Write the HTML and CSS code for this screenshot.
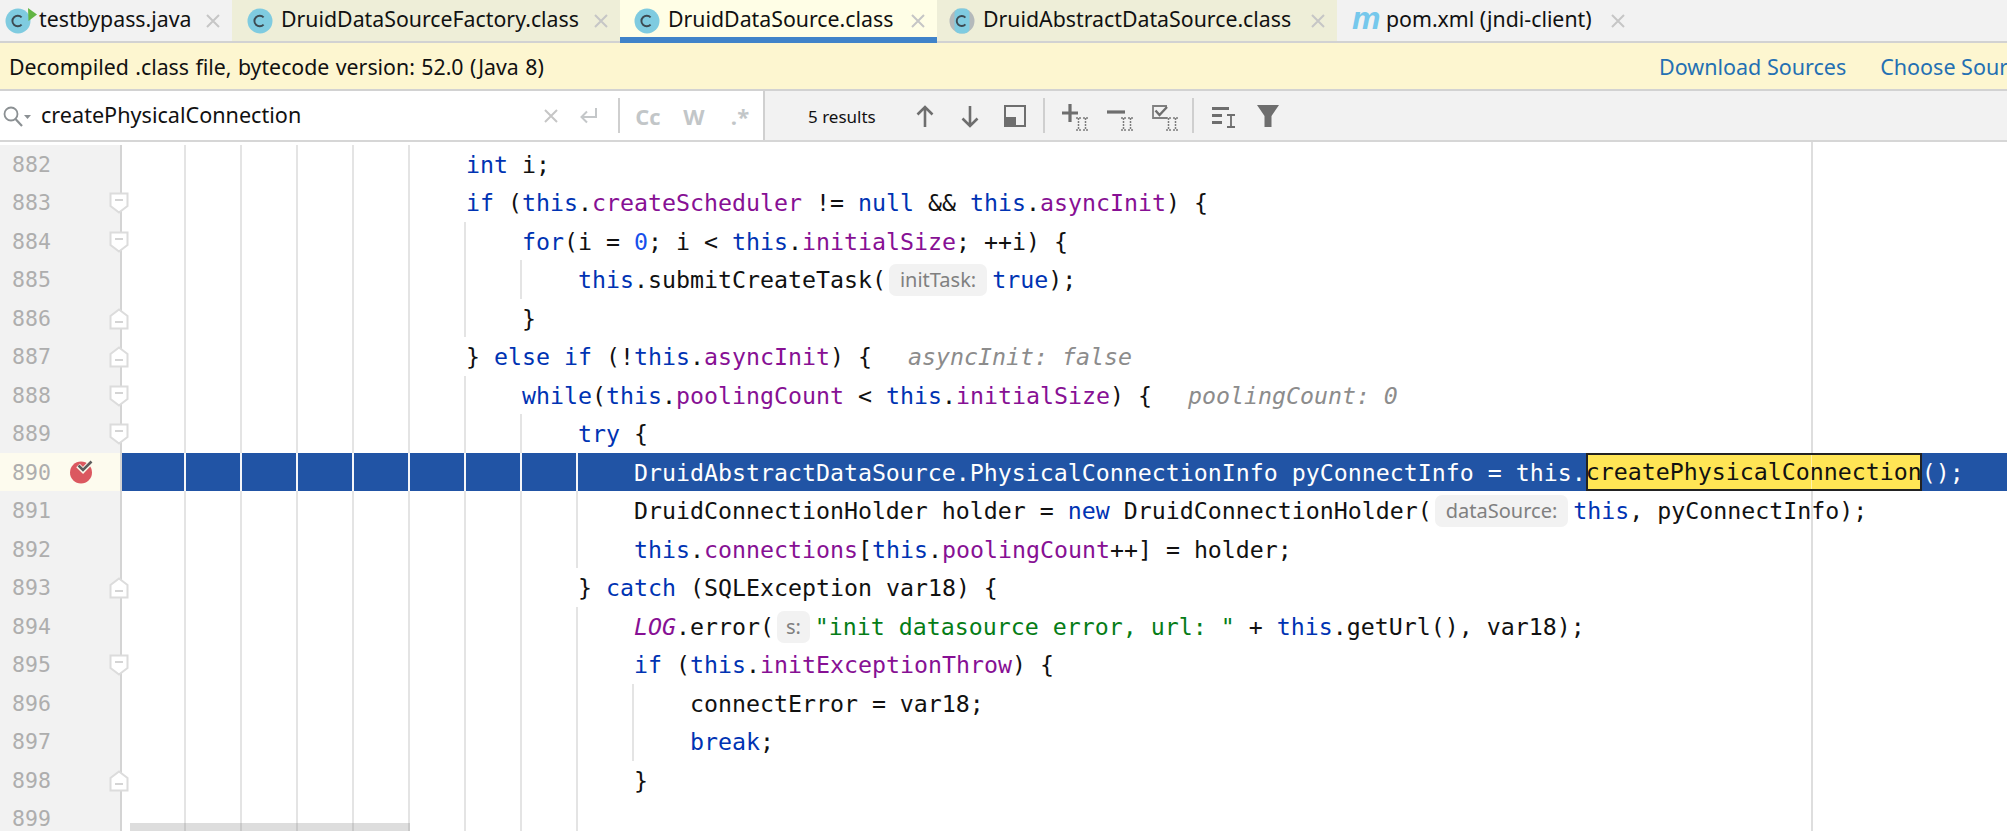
FILE: index.html
```html
<!DOCTYPE html>
<html lang="en">
<head>
<meta charset="utf-8">
<title>DruidDataSource.class</title>
<link rel="stylesheet" href="styles.css">
</head>
<body>
<svg class="defs" width="0" height="0" aria-hidden="true">
  <symbol id="fd" viewBox="0 0 20 22"><path d="M1.500 1.500H18.500V14L10 20.500L1.500 14Z" fill="#fff" stroke="#dcdcdc" stroke-width="2"/><path d="M6 8H14" stroke="#d4d4d4" stroke-width="2"/></symbol>
  <symbol id="fu" viewBox="0 0 20 22"><path d="M1.500 20.500H18.500V8L10 1.500L1.500 8Z" fill="#fff" stroke="#dcdcdc" stroke-width="2"/><path d="M6 14H14" stroke="#d4d4d4" stroke-width="2"/></symbol>
  <symbol id="x" viewBox="0 0 14 14"><path d="M1 1L13 13M13 1L1 13" stroke="#c6c6c6" stroke-width="2" fill="none"/></symbol>
  <symbol id="cls" viewBox="0 0 26 26"><circle cx="13" cy="13" r="12.5" fill="#7fcbe0"/><path d="M16.6 9.4A5.3 5.3 0 1 0 16.6 16.6" fill="none" stroke="#3d4a52" stroke-width="1.9"/></symbol>
  <symbol id="ii" viewBox="0 0 14 14"><path d="M1 1H6M8 1H13M1 13H6M8 13H13M3.5 1V13M10.5 1V13" stroke="#7c7c7c" stroke-width="1.5" stroke-dasharray="2 1" fill="none"/></symbol>
</svg>

<nav class="tabs">
  <div class="tab t1">
    <svg class="ticon" viewBox="0 0 34 26" width="34" height="26"><use href="#cls" width="26" height="26"/><path d="M23 0L32 6.5L23.5 13Z" fill="#62b543"/></svg>
    <span class="tname">testbypass.java</span>
    <svg class="tclose" width="14" height="14"><use href="#x"/></svg>
  </div>
  <div class="tab t2 olive">
    <svg class="ticon" width="26" height="26"><use href="#cls"/></svg>
    <span class="tname">DruidDataSourceFactory.class</span>
    <svg class="tclose" width="14" height="14"><use href="#x"/></svg>
  </div>
  <div class="tab t3 active">
    <svg class="ticon" width="26" height="26"><use href="#cls"/></svg>
    <span class="tname">DruidDataSource.class</span>
    <svg class="tclose" width="14" height="14"><use href="#x"/></svg>
  </div>
  <div class="tab t4 olive">
    <svg class="ticon" viewBox="0 0 26 26" width="26" height="26"><circle cx="13" cy="13" r="12.5" fill="#b4b9bb"/><rect x="5.5" y="0.5" width="15" height="25" rx="5" fill="#7fcbe0"/><path d="M16.4 9.6A5 5 0 1 0 16.4 16.4" fill="none" stroke="#3d4a52" stroke-width="1.9"/></svg>
    <span class="tname">DruidAbstractDataSource.class</span>
    <svg class="tclose" width="14" height="14"><use href="#x"/></svg>
  </div>
  <div class="tab t5">
    <span class="micon">m</span>
    <span class="tname">pom.xml (jndi-client)</span>
    <svg class="tclose" width="14" height="14"><use href="#x"/></svg>
  </div>
</nav>

<div class="info">
  <span class="info-msg">Decompiled .class file, bytecode version: 52.0 (Java 8)</span>
  <a class="link">Download Sources</a>
  <a class="link">Choose Sources...</a>
</div>

<div class="search">
  <div class="field">
    <svg class="mag" viewBox="0 0 34 24" width="34" height="24"><circle cx="9" cy="9" r="6.5" fill="none" stroke="#8b9093" stroke-width="1.8"/><path d="M13.5 14L20 21" stroke="#8b9093" stroke-width="2.2"/><path d="M22 10H29L25.500 14Z" fill="#8b9093"/></svg>
    <span class="query">createPhysicalConnection</span>
    <svg class="fclear" width="14" height="14"><use href="#x"/></svg>
    <svg class="fenter" viewBox="0 0 24 24" width="24" height="24"><path d="M20 4V13H6M11 7.500L5.500 13L11 18.500" fill="none" stroke="#c4c7c9" stroke-width="2"/></svg>
    <span class="sep fsep"></span>
    <span class="opt">Cc</span>
    <span class="opt">W</span>
    <span class="opt">.*</span>
  </div>
  <div class="tools">
    <span class="results">5 results</span>
    <svg class="ic up" viewBox="0 0 22 30" width="22" height="30"><path d="M11 26V7M3.500 13.500L11 6L18.500 13.500" fill="none" stroke="#6e6e6e" stroke-width="2.600"/></svg>
    <svg class="ic dn" viewBox="0 0 22 30" width="22" height="30"><path d="M11 5V24M3.500 17.500L11 25L18.500 17.500" fill="none" stroke="#6e6e6e" stroke-width="2.600"/></svg>
    <svg class="ic pane" viewBox="0 0 22 30" width="22" height="30"><rect x="1" y="5" width="20" height="20" fill="none" stroke="#6e6e6e" stroke-width="2"/><rect x="1" y="16" width="11" height="9" fill="#6e6e6e"/></svg>
    <span class="sep tsep1"></span>
    <svg class="ic plus" viewBox="0 0 30 30" width="30" height="30"><path d="M10 3V21M2 12H18" stroke="#6e6e6e" stroke-width="3.200"/><use href="#ii" x="15" y="16" width="14" height="14"/></svg>
    <svg class="ic minus" viewBox="0 0 30 30" width="30" height="30"><path d="M2 11H20" stroke="#6e6e6e" stroke-width="3.200"/><use href="#ii" x="15" y="16" width="14" height="14"/></svg>
    <svg class="ic check" viewBox="0 0 30 30" width="30" height="30"><path d="M17 5H3V17H17" fill="none" stroke="#808080" stroke-width="1.800"/><path d="M5.500 9.500L9.500 14L17 6" fill="none" stroke="#6e6e6e" stroke-width="2.400"/><use href="#ii" x="15" y="16" width="14" height="14"/></svg>
    <span class="sep tsep2"></span>
    <svg class="ic align" viewBox="0 0 26 30" width="26" height="30"><path d="M2 7.500H19M2 14.500H12M2 21.500H12" stroke="#6e6e6e" stroke-width="3"/><path d="M17 14H25M17 26H25M21 14V26" stroke="#6e6e6e" stroke-width="1.800" fill="none"/></svg>
    <svg class="ic funnel" viewBox="0 0 24 30" width="24" height="30"><path d="M1 4H23L15.500 15V26H8.500V15Z" fill="#6e6e6e"/></svg>
  </div>
</div>

<main class="editor">
  <div class="row"><div class="gut">882</div><pre class="code d5">                        <b>int</b> i;</pre></div>
  <div class="row"><div class="gut">883<svg class="fold"><use href="#fd"/></svg></div><pre class="code d5">                        <b>if</b> (<b>this</b>.<i>createScheduler</i> != <b>null</b> &amp;&amp; <b>this</b>.<i>asyncInit</i>) {</pre></div>
  <div class="row"><div class="gut">884<svg class="fold"><use href="#fd"/></svg></div><pre class="code d6">                            <b>for</b>(i = <u>0</u>; i &lt; <b>this</b>.<i>initialSize</i>; ++i) {</pre></div>
  <div class="row"><div class="gut">885</div><pre class="code d7">                                <b>this</b>.submitCreateTask(<span class="hint">initTask:</span><b>true</b>);</pre></div>
  <div class="row"><div class="gut">886<svg class="fold"><use href="#fu"/></svg></div><pre class="code d6">                            }</pre></div>
  <div class="row"><div class="gut">887<svg class="fold"><use href="#fu"/></svg></div><pre class="code d5">                        } <b>else if</b> (!<b>this</b>.<i>asyncInit</i>) {<em class="dbg">asyncInit: false</em></pre></div>
  <div class="row"><div class="gut">888<svg class="fold"><use href="#fd"/></svg></div><pre class="code d6">                            <b>while</b>(<b>this</b>.<i>poolingCount</i> &lt; <b>this</b>.<i>initialSize</i>) {<em class="dbg">poolingCount: 0</em></pre></div>
  <div class="row"><div class="gut">889<svg class="fold"><use href="#fd"/></svg></div><pre class="code d7">                                <b>try</b> {</pre></div>
  <div class="row exec"><div class="gut">890<svg class="bp" viewBox="0 0 26 26" width="26" height="26"><circle cx="12" cy="14.500" r="11" fill="#db5860"/><path d="M9 7.500L14 12.500L23 3" fill="none" stroke="#fdfbee" stroke-width="5"/><path d="M9.500 7.500L14 12L22.500 3.500" fill="none" stroke="#5c5c5c" stroke-width="2.600"/></svg></div><pre class="code d8">                                    DruidAbstractDataSource.PhysicalConnectionInfo pyConnectInfo = this.<span class="match">createPhysicalConnection</span>();</pre></div>
  <div class="row"><div class="gut">891</div><pre class="code d8">                                    DruidConnectionHolder holder = <b>new</b> DruidConnectionHolder(<span class="hint">dataSource:</span><b>this</b>, pyConnectInfo);</pre></div>
  <div class="row"><div class="gut">892</div><pre class="code d8">                                    <b>this</b>.<i>connections</i>[<b>this</b>.<i>poolingCount</i>++] = holder;</pre></div>
  <div class="row"><div class="gut">893<svg class="fold"><use href="#fu"/></svg></div><pre class="code d7">                                } <b>catch</b> (SQLException var18) {</pre></div>
  <div class="row"><div class="gut">894</div><pre class="code d8">                                    <i class="static">LOG</i>.error(<span class="hint hint-s">s:</span><s>"init datasource error, url: "</s> + <b>this</b>.getUrl(), var18);</pre></div>
  <div class="row"><div class="gut">895<svg class="fold"><use href="#fd"/></svg></div><pre class="code d8">                                    <b>if</b> (<b>this</b>.<i>initExceptionThrow</i>) {</pre></div>
  <div class="row"><div class="gut">896</div><pre class="code d9">                                        connectError = var18;</pre></div>
  <div class="row"><div class="gut">897</div><pre class="code d9">                                        <b>break</b>;</pre></div>
  <div class="row"><div class="gut">898<svg class="fold"><use href="#fu"/></svg></div><pre class="code d8">                                    }</pre></div>
  <div class="row"><div class="gut">899</div><pre class="code d8"> </pre></div>
  <div class="hscroll"></div>
</main>
</body>
</html>
```
FILE: styles.css
```css
* { box-sizing: border-box; }
html, body { margin: 0; height: 100%; overflow: hidden; background: #fff; }
body { width: 2007px; height: 831px; font-family: "Noto Sans", "Open Sans", sans-serif; color: #111; }
.defs { position: absolute; }

/* tabs */
.tabs { display: flex; height: 43px; background: #f2f2f2; border-bottom: 2px solid #d2d2d2; }
.tab { display: flex; align-items: center; height: 41px; font-size: 21.3px; white-space: nowrap; padding-left: 5px; position: relative; }
.tab .tname { flex: none; padding-bottom: 4px; }
.t1 { width: 232px; }
.t2 { width: 388px; padding-left: 15px; }
.t3 { width: 317px; padding-left: 14px; }
.t4 { width: 400px; padding-left: 12px; }
.t5 { width: 300px; padding-left: 15px; }
.olive { background: #eeeed8; }
.active { background: #fffee6; box-shadow: inset 0 -4px 0 #4083c9, 0 2px 0 #4083c9; }
.ticon { flex: none; margin-right: 8px; }
.t1 .ticon { margin-right: 0; }
.tclose { flex: none; margin-left: auto; margin-right: 12px; }
.micon { font-family: "Liberation Sans", sans-serif; font-weight: 700; font-style: italic; font-size: 32px; line-height: 36px; color: #76c8ec; width: 34px; margin-top: -6px; }

/* info bar */
.info { display: flex; align-items: center; height: 48px; background: #fdf6d0; border-bottom: 2px solid #d2d2d2; padding-left: 9px; font-size: 21.3px; white-space: nowrap; }
.info-msg { flex: none; width: 1650px; word-spacing: 0.9px; }
.link { flex: none; color: #2470b3; margin-right: 34px; font-size: 21.5px; }

/* search */
.search { display: flex; height: 51px; background: #f2f2f2; border-bottom: 2px solid #d6d6d6; }
.field { flex: none; display: flex; align-items: center; width: 765px; height: 49px; background: #fff; border-right: 2px solid #d0d0d0; padding-left: 2px; }
.mag { flex: none; margin-top: 3px; }
.query { flex: 1; padding-left: 5px; padding-bottom: 3px; font-size: 21.6px; }
.fclear { flex: none; margin-right: 18px; }
.fenter { flex: none; margin-right: 18px; }
.sep { flex: none; width: 2px; height: 35px; background: #cfcfcf; }
.fsep { margin-right: 5px; }
.opt { flex: none; width: 46px; text-align: center; font-family: "Open Sans", sans-serif; font-weight: 700; font-size: 22px; color: #c2c6c8; }
.tools { display: flex; align-items: center; height: 49px; flex: 1; }
.results { flex: none; width: 67px; margin-left: 43px; font-size: 17px; white-space: nowrap; padding-top: 1px; }
.ic { flex: none; }
.up { margin-left: 39px; }
.dn, .pane { margin-left: 23px; }
.tsep1 { margin-left: 17px; }
.plus { margin-left: 15px; }
.minus, .check { margin-left: 15px; }
.tsep2 { margin-left: 12px; }
.align { margin-left: 16px; }
.funnel { margin-left: 20px; }

/* editor */
.editor { position: relative; height: 689px; padding-top: 2.5px; overflow: hidden; background: linear-gradient(#dedede, #dedede) 1811px 0 / 2px 100% no-repeat; }
.row { display: flex; height: 38.5px; }
.gut { flex: none; position: relative; width: 122px; background-color: #f2f2f2; border-right: 2px solid #d4d4d4; padding: 1px 0 0 12px; font-family: "DejaVu Sans Mono", monospace; font-size: 21.500px; line-height: 38.5px; color: #aeaeae; }
.fold { position: absolute; z-index: 1; top: 9px; right: -9px; width: 20px; height: 22px; }
.bp { position: absolute; top: 5px; left: 69px; }
.code { flex: 1; min-width: 0; margin: 0; padding: 1px 0 0 8px; font-family: "DejaVu Sans Mono", monospace; font-size: 23.250px; line-height: 38.5px; color: #111; white-space: pre; background-image: repeating-linear-gradient(90deg, #e4e4e4 0 2px, transparent 2px 56px); background-repeat: no-repeat; background-position: 62px 0; }
.d5 { background-size: 280px 100%; }
.d6 { background-size: 336px 100%; }
.d7 { background-size: 392px 100%; }
.d8 { background-size: 448px 100%; }
.d9 { background-size: 504px 100%; }
.code b { font-weight: 400; color: #0033b3; }
.code i { font-style: normal; color: #871094; }
.code i.static { font-style: italic; }
.code u { text-decoration: none; color: #1750eb; }
.code s { text-decoration: none; color: #067d17; }
.hint { display: inline-block; height: 32px; line-height: 31px; vertical-align: 1px; margin: 0 5px 0 3px; padding: 0 11px; border-radius: 7px; background: #f2f2f2; color: #808080; font-family: "Noto Sans", sans-serif; font-size: 20px; }
.hint-s { padding: 0 9px; }
.dbg { margin-left: 36px; color: #8c8c8c; font-style: italic; }
.exec .gut { background-color: #fdfbee; }
.exec .code { color: #fff; background-color: #2154a5; background-image: repeating-linear-gradient(90deg, #f4f6fa 0 2px, transparent 2px 56px); }
.match { display: inline-block; height: 38px; margin-top: -1px; vertical-align: top; color: #111; background: linear-gradient(rgba(255,255,255,.5), rgba(255,255,255,.5)) 225px 0 / 1px 100% no-repeat, #ffe555; outline: 2px solid #222; outline-offset: -2px; }
.hscroll { position: absolute; left: 130px; bottom: 0; width: 280px; height: 8px; background: rgba(120,120,120,.25); }
```
